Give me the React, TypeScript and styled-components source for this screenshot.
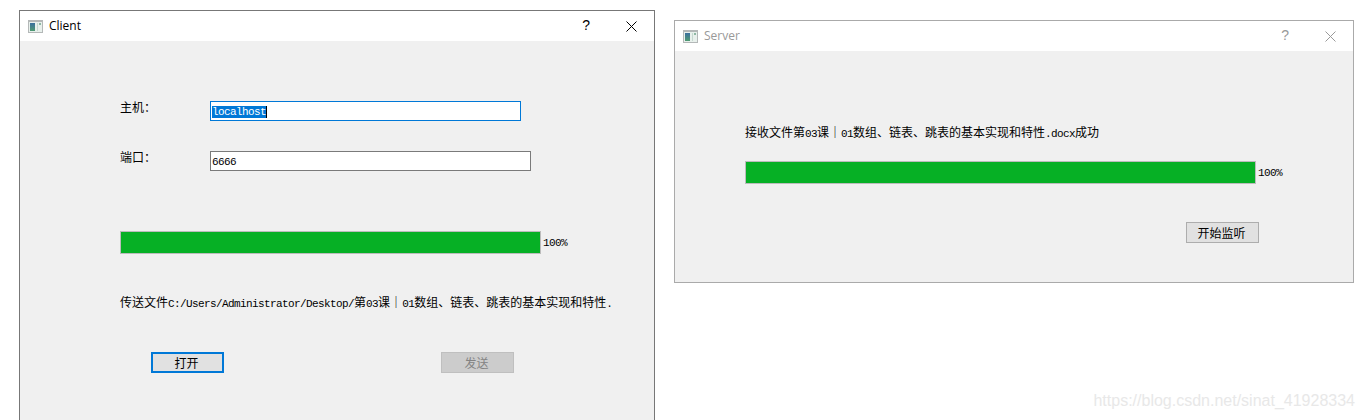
import React from "react";
import styled, { createGlobalStyle } from "styled-components";

const GlobalStyle = createGlobalStyle`
  html, body {
    margin: 0;
    padding: 0;
    background: #fff;
    overflow: hidden;
  }
  * {
    box-sizing: border-box;
  }
`;

const Desktop = styled.div`
  position: relative;
  display: flex;
  align-items: flex-start;
  gap: 19px;
  width: 1364px;
  height: 420px;
  padding-left: 19px;
  overflow: hidden;
  color: #000;
  font-family: "Noto Sans CJK SC", "Liberation Mono", sans-serif;
  font-size: 12px;
  line-height: 12px;
`;

const Window = styled.div<{ $active?: boolean; $top: number; $width: number; $height: number }>`
  flex: none;
  margin-top: ${(props) => props.$top}px;
  width: ${(props) => props.$width}px;
  height: ${(props) => props.$height}px;
  border: 1px solid ${(props) => (props.$active ? "#777777" : "#aaaaaa")};
  background: #f0f0f0;
`;

const TitleBar = styled.div<{ $active?: boolean }>`
  display: flex;
  align-items: center;
  height: 30px;
  padding: 0 17px 0 8px;
  background: #fff;
  color: ${(props) => (props.$active ? "#000" : "#999999")};
`;

const TitleText = styled.span`
  margin-left: 6px;
  font-family: "Open Sans", sans-serif;
  font-size: 12px;
  line-height: 16px;
`;

const HelpMark = styled.span`
  margin-left: auto;
  margin-right: 36px;
  margin-top: -3px;
  font-family: "Liberation Sans", sans-serif;
  font-size: 14px;
  line-height: 16px;
`;

const ClientBody = styled.div`
  padding: 60px 0 0 100px;
`;

const ServerBody = styled.div`
  padding: 75px 0 0 70px;
`;

const FormRow = styled.div`
  display: flex;
  align-items: flex-start;
  margin-bottom: 30px;
`;

const FieldLabel = styled.div`
  width: 90px;
`;

const TextField = styled.div<{ $focused?: boolean; $width: number }>`
  display: flex;
  align-items: center;
  width: ${(props) => props.$width}px;
  height: 20px;
  padding: 1px 0 0 1px;
  background: #fff;
  border: 1px solid ${(props) => (props.$focused ? "#0078d7" : "#7a7a7a")};
`;

const Selected = styled.span`
  display: inline-flex;
  align-items: center;
  height: 12px;
  background: #0078d7;
  border-right: 1px solid #000;
  color: #fff;
`;

const Latin = styled.span`
  font-family: "Liberation Mono", monospace;
  font-size: 11px;
  letter-spacing: -0.6px;
`;

const Divider = styled.span`
  font-weight: 700;
`;

const ProgressRow = styled.div<{ $top: number }>`
  display: flex;
  align-items: center;
  gap: 2px;
  margin-top: ${(props) => props.$top}px;
`;

const ProgressTrack = styled.div<{ $width: number }>`
  width: ${(props) => props.$width}px;
  height: 23px;
  border: 1px solid #bcbcbc;
  background: #e6e6e6;
`;

const ProgressFill = styled.div`
  height: 100%;
  background: #06b025;
`;

const ProgressValue = styled(Latin)`
  padding-top: 1px;
`;

const Message = styled.div<{ $top: number }>`
  margin-top: ${(props) => props.$top}px;
  height: 12px;
  white-space: nowrap;
`;

const ButtonRow = styled.div<{ $top: number; $left: number }>`
  display: flex;
  gap: 217px;
  margin-top: ${(props) => props.$top}px;
  margin-left: ${(props) => props.$left}px;
`;

const PushButton = styled.div<{ $focused?: boolean; $disabled?: boolean }>`
  display: flex;
  align-items: center;
  justify-content: center;
  width: 73px;
  height: 21px;
  padding-right: 2px;
  border: ${(props) =>
    props.$focused
      ? "2px solid #0078d7"
      : props.$disabled
        ? "1px solid #bfbfbf"
        : "1px solid #adadad"};
  background: ${(props) => (props.$disabled ? "#cccccc" : "#e1e1e1")};
  color: ${(props) => (props.$disabled ? "#838383" : "#000")};
`;

const Watermark = styled.div`
  position: absolute;
  right: 9px;
  bottom: 9px;
  color: #e8e8e8;
  font-family: "Liberation Sans", sans-serif;
  font-size: 16px;
  line-height: 20px;
`;

// SimSun pairs 12px hanzi with 6px wide latin, so the latin runs get a squeezed mono
function Mixed({ text }: { text: string }) {
  const parts = text.split(/([\x20-\x7e]+|｜)/).filter(Boolean);
  return (
    <>
      {parts.map((part, i) => {
        if (part === "｜") return <Divider key={i}>{part}</Divider>;
        if (/^[\x20-\x7e]+$/.test(part)) return <Latin key={i}>{part}</Latin>;
        return <span key={i}>{part}</span>;
      })}
    </>
  );
}

function AppIcon() {
  return (
    <svg width="15" height="13" viewBox="0 0 15 13">
      <defs>
        <linearGradient id="pane" x1="0" y1="0" x2="0" y2="1">
          <stop offset="0" stopColor="#3a6f9e" />
          <stop offset="1" stopColor="#4f9a72" />
        </linearGradient>
      </defs>
      <rect x="0" y="0" width="15" height="13" fill="#b4b8b8" />
      <rect x="1" y="2" width="13" height="10" fill="#e8f0ec" />
      <rect x="2" y="3" width="5" height="8" fill="url(#pane)" />
      <rect x="9" y="3" width="1" height="8" fill="#c4d8cf" />
      <rect x="11" y="3" width="2" height="2" fill="#8fb8a4" />
    </svg>
  );
}

function CloseMark({ color }: { color: string }) {
  return (
    <svg width="11" height="11" viewBox="0 0 11 11">
      <path d="M0.5 0.5L10.5 10.5M10.5 0.5L0.5 10.5" stroke={color} strokeWidth="1" fill="none" />
    </svg>
  );
}

function Title({ label, active }: { label: string; active?: boolean }) {
  return (
    <TitleBar $active={active}>
      <AppIcon />
      <TitleText>{label}</TitleText>
      <HelpMark>?</HelpMark>
      <CloseMark color={active ? "#000" : "#999999"} />
    </TitleBar>
  );
}

function Progress({ width, top }: { width: number; top: number }) {
  const value = 100;
  return (
    <ProgressRow $top={top}>
      <ProgressTrack $width={width}>
        <ProgressFill style={{ width: `${value}%` }} />
      </ProgressTrack>
      <ProgressValue>{value}%</ProgressValue>
    </ProgressRow>
  );
}

export default function App() {
  return (
    <Desktop>
      <GlobalStyle />
      <Window $active $top={10} $width={636} $height={430}>
        <Title label="Client" active />
        <ClientBody>
          <FormRow>
            <FieldLabel>主机：</FieldLabel>
            <TextField $focused $width={311}>
              <Selected>
                <Latin>localhost</Latin>
              </Selected>
            </TextField>
          </FormRow>
          <FormRow>
            <FieldLabel>端口：</FieldLabel>
            <TextField $width={321}>
              <Latin>6666</Latin>
            </TextField>
          </FormRow>
          <Progress width={421} top={60} />
          <Message $top={42}>
            <Mixed text="传送文件C:/Users/Administrator/Desktop/第03课｜01数组、链表、跳表的基本实现和特性." />
          </Message>
          <ButtonRow $top={44} $left={31}>
            <PushButton $focused>打开</PushButton>
            <PushButton $disabled>发送</PushButton>
          </ButtonRow>
        </ClientBody>
      </Window>
      <Window $top={20} $width={680} $height={263}>
        <Title label="Server" />
        <ServerBody>
          <Message $top={0}>
            <Mixed text="接收文件第03课｜01数组、链表、跳表的基本实现和特性.docx成功" />
          </Message>
          <Progress width={511} top={23} />
          <ButtonRow $top={38} $left={441}>
            <PushButton>开始监听</PushButton>
          </ButtonRow>
        </ServerBody>
      </Window>
      <Watermark>https://blog.csdn.net/sinat_41928334</Watermark>
    </Desktop>
  );
}
